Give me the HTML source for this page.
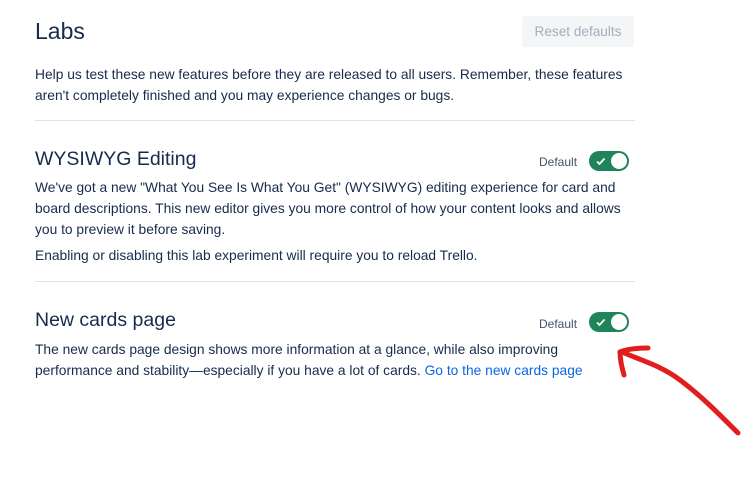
<!DOCTYPE html>
<html><head><style>
body{margin:0;width:741px;height:486px;background:#fff;font-family:"Liberation Sans",sans-serif;color:#172b4d;position:relative;overflow:hidden}
.a{position:absolute}
p{margin:0;font-size:13.8px;line-height:21px}
.h1{font-size:23px;left:35px;top:18px}
.h2{font-size:19.5px;left:35px}
.btn{left:522px;top:16px;width:112px;height:31px;background:#f4f5f7;border-radius:3px;color:#a5adba;font-size:13.6px;line-height:31px;text-align:center}
.hr{left:35px;width:600px;height:1px;background:#dfe1e6}
.def{font-size:12px;color:#42526e;left:539px}
.tg{left:589px;width:40px;height:20px;border-radius:10px;background:#1f845a}
.tg:after{content:"";position:absolute;right:2px;top:2px;width:16px;height:16px;border-radius:50%;background:#fff}
a{color:#0c66e4;text-decoration:none}
</style></head><body>
<div class="a h1">Labs</div>
<div class="a btn">Reset defaults</div>
<p class="a" style="left:35px;top:64px;width:600px">Help us test these new features before they are released to all users. Remember, these features aren't completely finished and you may experience changes or bugs.</p>
<div class="a hr" style="top:120px"></div>
<div class="a h2" style="top:148px">WYSIWYG Editing</div>
<div class="a def" style="top:155px">Default</div>
<div class="a tg" style="top:151px"><svg width="14" height="14" style="position:absolute;left:5px;top:3px"><path d="M3 7.5l2.5 2.5L10.5 4.5" stroke="#fff" stroke-width="1.8" fill="none"/></svg></div>
<p class="a" style="left:35px;top:177px;width:600px">We've got a new "What You See Is What You Get" (WYSIWYG) editing experience for card and board descriptions. This new editor gives you more control of how your content looks and allows you to preview it before saving.</p>
<p class="a" style="left:35px;top:245px;width:610px">Enabling or disabling this lab experiment will require you to reload Trello.</p>
<div class="a hr" style="top:281px"></div>
<div class="a h2" style="top:309px">New cards page</div>
<div class="a def" style="top:317px">Default</div>
<div class="a tg" style="top:312px"><svg width="14" height="14" style="position:absolute;left:5px;top:3px"><path d="M3 7.5l2.5 2.5L10.5 4.5" stroke="#fff" stroke-width="1.8" fill="none"/></svg></div>
<p class="a" style="left:35px;top:339px;width:600px">The new cards page design shows more information at a glance, while also improving<br>performance and stability—especially if you have a lot of cards. <a>Go to the new cards page</a></p>
<svg class="a" style="left:0;top:0" width="741" height="486"><g stroke="#e01e1e" stroke-width="5" fill="none" stroke-linecap="round" stroke-linejoin="round"><path d="M738 433C715 410 700 395 680 380C660 365 640 360 622 352"/><path d="M648 348C635 348 625 350 620 352C620 360 622 368 624 375"/></g></svg>
</body></html>
